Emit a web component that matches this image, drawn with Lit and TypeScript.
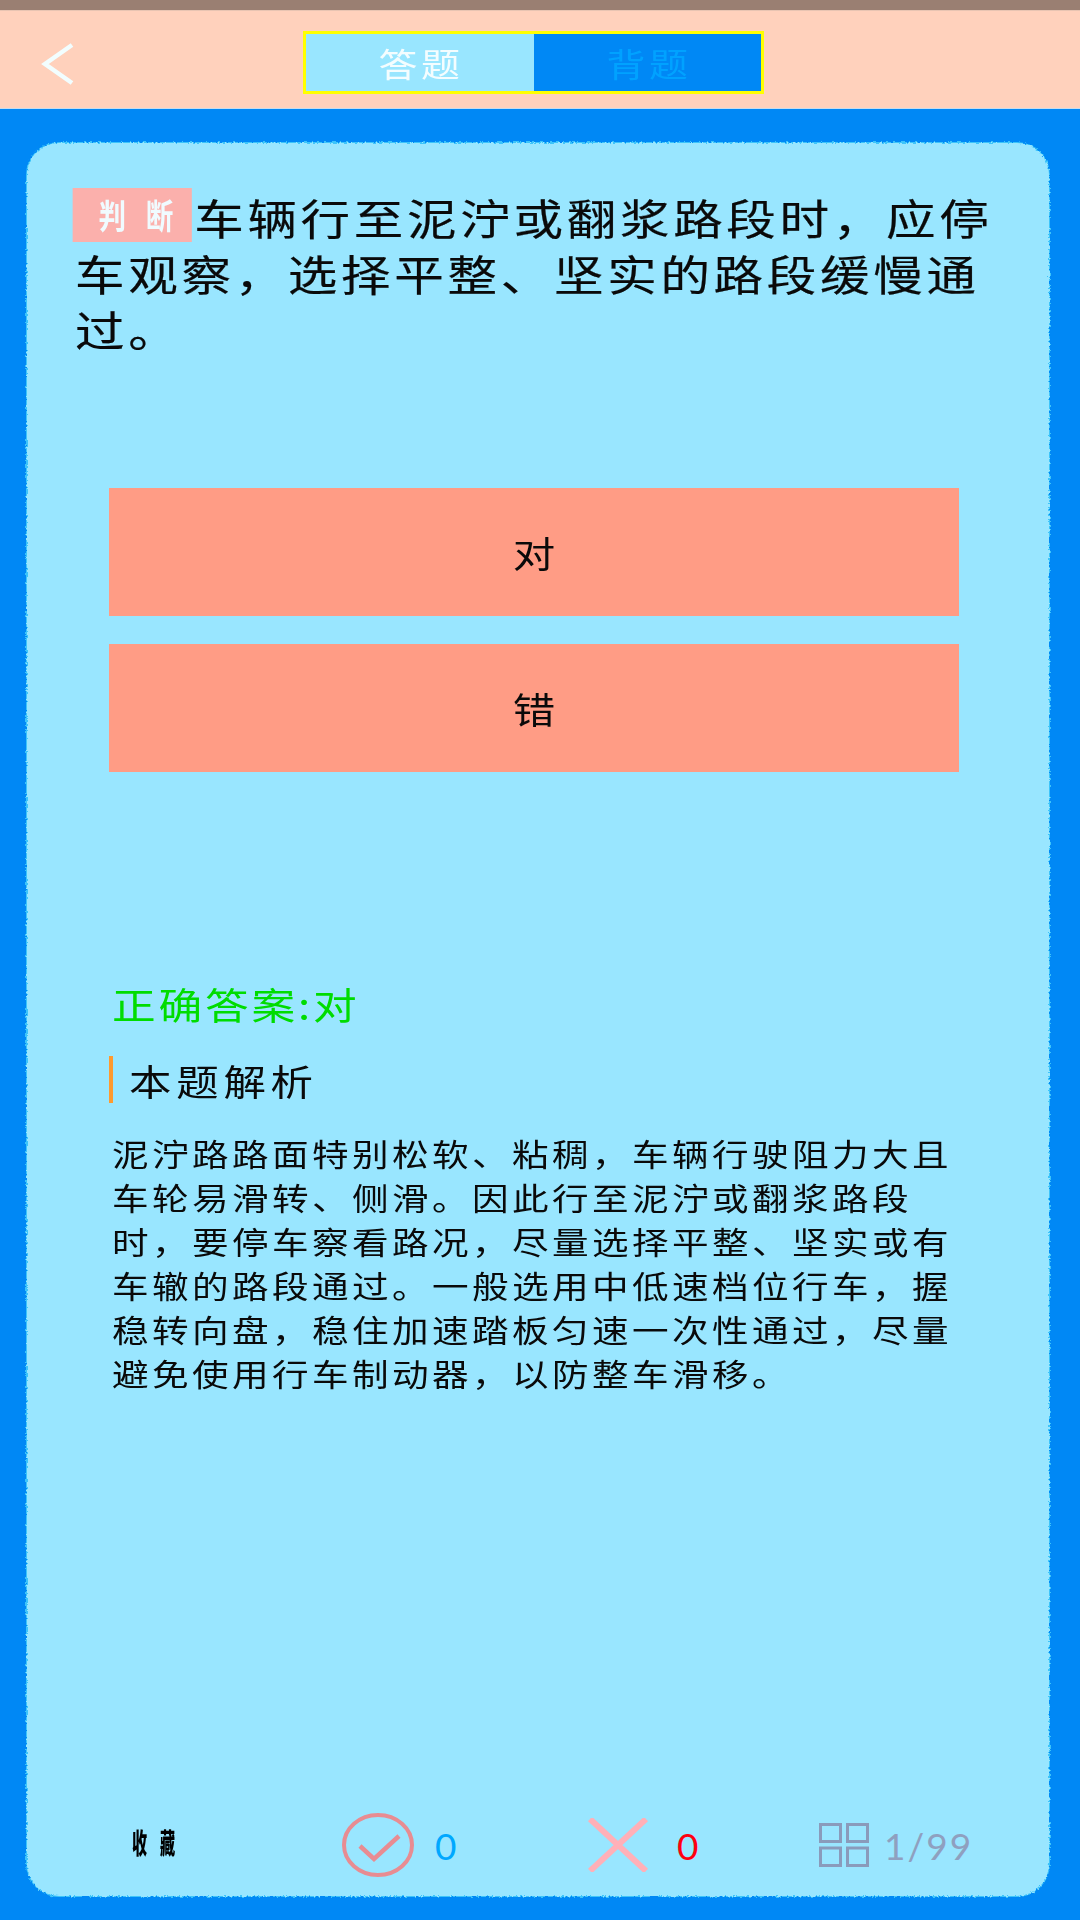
import { LitElement, html, css } from "lit";
import { customElement } from "lit/decorators.js";

@customElement("app-root")
export class AppRoot extends LitElement {
  static styles = css`
    :host { display: flex; flex-direction: column; width: 1080px; height: 1920px; overflow: hidden; font-family: "Noto Sans CJK SC", "Noto Sans", sans-serif; color: #0a0a0a; background: #0088f5; }
    .status { height: 10px; flex: none; background: #9a7f72; }
    .header { height: 99px; flex: none; box-sizing: border-box; display: flex; align-items: center; padding-left: 41px; background: #ffd1bc; border-bottom: 1px solid #c8dcec; border-top: 1px solid #e8c4b2; }
    .back { width: 33px; height: 42px; flex: none; margin-top: 8px; }
    .seg { display: flex; width: 461px; height: 63px; box-sizing: border-box; margin-left: 229px; margin-top: 6px; border: 3px solid #ffff00; }
    .seg div { flex: 0 0 50%; box-sizing: border-box; display: flex; align-items: center; justify-content: center; font-size: 33px; }
    .seg span { display: inline-block; transform: scaleX(1.18); letter-spacing: 3px; }
    .seg .a { background: #99e6ff; color: #f4fdff; padding-left: 2px; }
    .seg .b { background: #0088f5; color: #00a2ff; padding-left: 4px; }
    .body { flex: 1; min-height: 0; display: flex; padding: 34px 31px 24px 27px; }
    .card { position: relative; flex: 1; display: flex; flex-direction: column; box-sizing: border-box; padding: 46px 0 19px; }
    .cardbg { position: absolute; inset: 0; background: #99e6ff; border-radius: 32px; box-shadow: 0 0 0 1px #3cc4fa; filter: url(#rough); }
    .content { position: relative; display: flex; flex-direction: column; flex: 1; }
    .wide { transform: scaleX(1.18); transform-origin: left center; }
    .q { margin: 0 0 0 48px; width: 790px; font-size: 42px; line-height: 56px; letter-spacing: 3.1px; -webkit-text-stroke: 0.2px #0a0a0a; }
    .tag { display: inline-flex; box-sizing: border-box; width: 101px; height: 54px; margin: -1px 2px 0 -2px; padding-left: 22px; align-items: center; vertical-align: top; background: #fbb0ac; color: #f0fbff; font-size: 26px; font-weight: 700; letter-spacing: 0; line-height: 54px; -webkit-text-stroke: 0; }
    .tag span { display: inline-block; width: 41px; transform: scale(0.9, 1.3); transform-origin: left center; }
    .opts { margin: 131px 0 0 82px; width: 850px; display: flex; flex-direction: column; gap: 28px; }
    .opt { height: 128px; display: flex; align-items: center; justify-content: center; background: #ff9c85; font-size: 36px; }
    .opt span { display: inline-block; transform: scaleX(1.18); margin-top: -1px; }
    .ans { margin: 210px 0 0 85px; height: 44px; line-height: 44px; color: #00dc00; font-size: 37px; letter-spacing: 2.4px; }
    .head { margin: 30px 0 0 82px; height: 47px; box-sizing: border-box; border-left: 4px solid #ff9a2e; padding-left: 16px; display: flex; align-items: center; }
    .head span { font-size: 36px; letter-spacing: 4px; display: block; }
    .exp { margin: 28px 0 0 85px; width: 725px; font-size: 31px; line-height: 44px; letter-spacing: 2.9px; }
    .foot { margin-top: auto; height: 64px; display: grid; grid-template-columns: 210px 246px 231px 1fr; padding-left: 105px; align-items: center; font-family: Lato, sans-serif; font-size: 37px; }
    .item { display: flex; align-items: center; }
    .fav { display: flex; font-family: "Noto Sans CJK SC", sans-serif; font-size: 26px; font-weight: 900; color: #000; margin-top: -8px; }
    .fav span { display: block; width: 28px; transform: scale(0.58, 1.08); transform-origin: left center; }
    .n0 { color: #00a8ff; margin-left: 21px; }
    .n1 { color: #ff0010; margin-left: 29px; }
    .n2 { color: #8fa0bf; margin-left: 15px; letter-spacing: 2px; }
    .hidden { position: absolute; width: 0; height: 0; }
  `;

  render() {
    return html`
      <svg class="hidden" aria-hidden="true">
        <filter id="rough" x="-2%" y="-2%" width="104%" height="104%">
          <feTurbulence type="fractalNoise" baseFrequency="0.45" numOctaves="2" seed="4" result="n" />
          <feDisplacementMap in="SourceGraphic" in2="n" scale="4" xChannelSelector="R" yChannelSelector="G" />
        </filter>
      </svg>
      <div class="status"></div>
      <div class="header">
        <svg class="back" viewBox="0 0 33 42" fill="none" stroke="#f2feff" stroke-width="4.5"><path d="M31 2 L4 21 L31 40" /></svg>
        <div class="seg">
          <div class="a"><span>答题</span></div>
          <div class="b"><span>背题</span></div>
        </div>
      </div>
      <div class="body">
        <div class="card">
          <div class="cardbg"></div>
          <div class="content">
            <p class="q wide"><span class="tag"><span>判</span><span>断</span></span>车辆行至泥泞或翻浆路段时，应停车观察，选择平整、坚实的路段缓慢通过。</p>
            <div class="opts">
              <div class="opt"><span>对</span></div>
              <div class="opt"><span>错</span></div>
            </div>
            <div class="ans"><div class="wide">正确答案:对</div></div>
            <div class="head"><span class="wide">本题解析</span></div>
            <div class="exp wide">泥泞路路面特别松软、粘稠，车辆行驶阻力大且车轮易滑转、侧滑。因此行至泥泞或翻浆路段时，要停车察看路况，尽量选择平整、坚实或有车辙的路段通过。一般选用中低速档位行车，握稳转向盘，稳住加速踏板匀速一次性通过，尽量避免使用行车制动器，以防整车滑移。</div>
            <div class="foot">
              <div class="item fav"><span>收</span><span>藏</span></div>
              <div class="item">
                <svg width="72" height="64" viewBox="0 0 72 64" fill="none" stroke="#e88c92"><ellipse cx="36" cy="32" rx="34" ry="30" stroke-width="4" /><path d="M18 33 L32 46 L57 23" stroke-width="4.5" /></svg>
                <span class="n0">0</span>
              </div>
              <div class="item">
                <svg width="60" height="54" viewBox="0 0 60 54" fill="none" stroke="#ffb0b8" stroke-width="6"><path d="M2 1 L58 53 M58 1 L2 53" /></svg>
                <span class="n1">0</span>
              </div>
              <div class="item">
                <svg width="50" height="44" viewBox="0 0 50 44" fill="none" stroke="#8a9bbb" stroke-width="3"><rect x="1.5" y="1.5" width="20" height="17" /><rect x="28.5" y="1.5" width="20" height="17" /><rect x="1.5" y="25" width="20" height="17.5" /><rect x="28.5" y="25" width="20" height="17.5" /></svg>
                <span class="n2">1/99</span>
              </div>
            </div>
          </div>
        </div>
      </div>
    `;
  }
}
